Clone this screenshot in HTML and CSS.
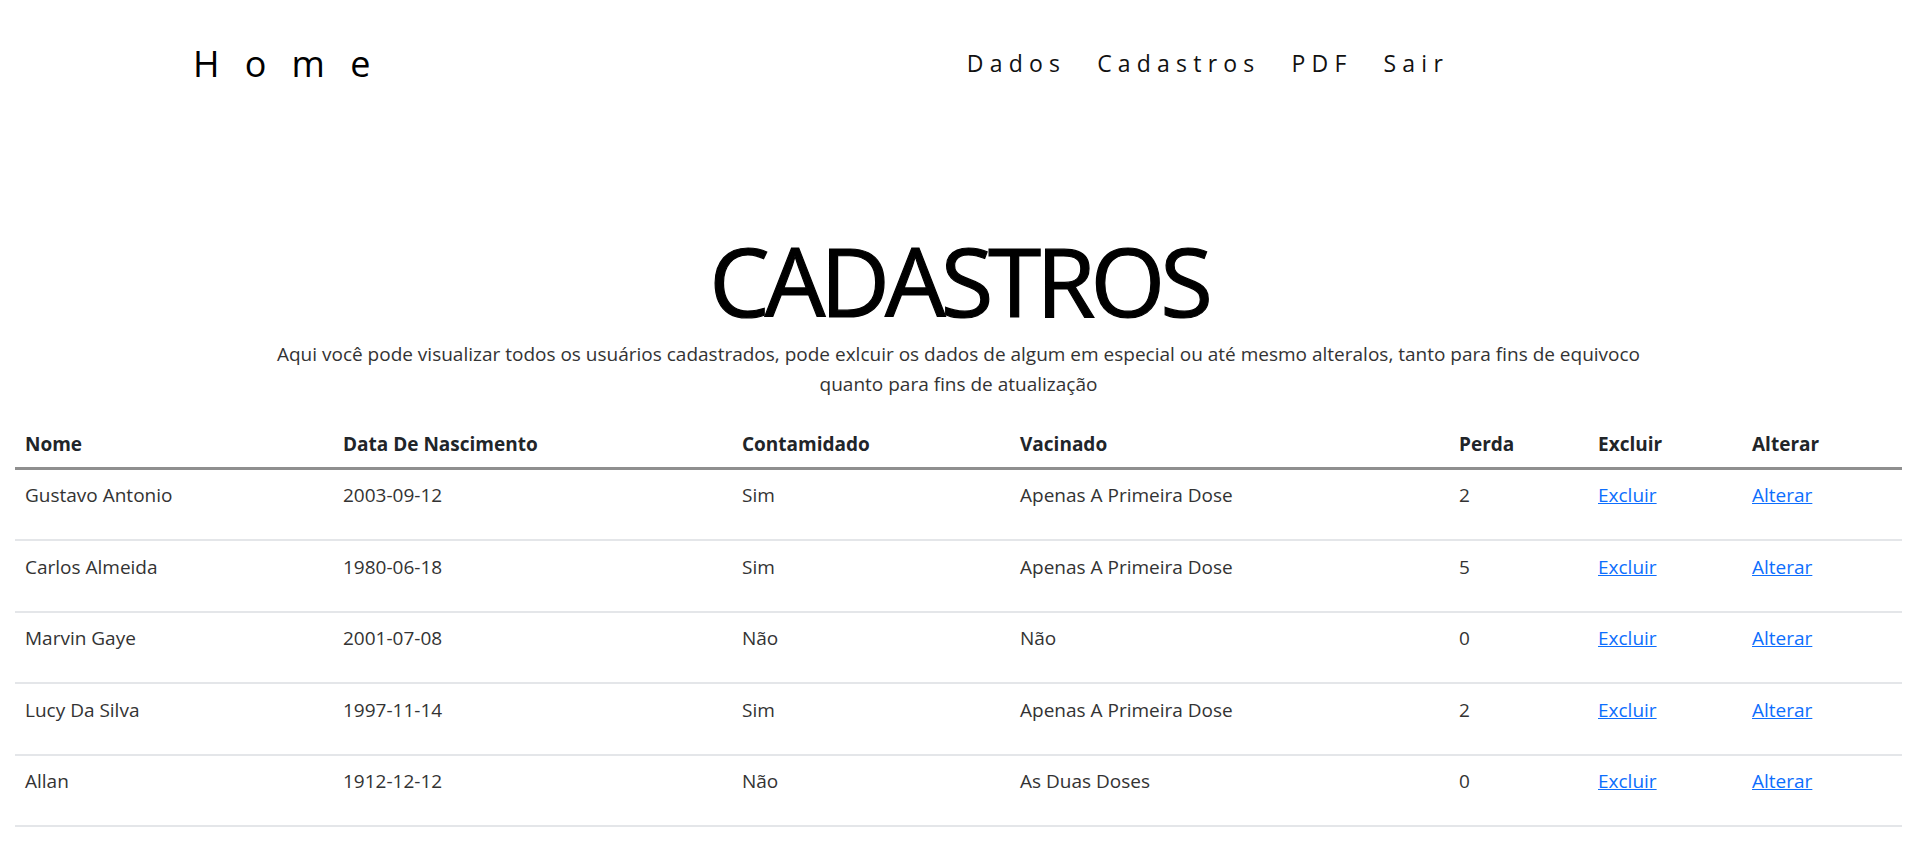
FILE: index.html
```html
<!DOCTYPE html>
<html lang="pt-BR">
<head>
<meta charset="utf-8">
<title>Cadastros</title>
<link rel="stylesheet" href="styles.css">
</head>
<body>
<header class="topbar">
  <a class="brand" href="#">Home</a>
  <nav class="menu">
    <a href="#">Dados</a>
    <a href="#">Cadastros</a>
    <a href="#">PDF</a>
    <a href="#">Sair</a>
  </nav>
</header>
<main>
  <h1 class="title">CADASTROS</h1>
  <p class="lead">Aqui você pode visualizar todos os usuários cadastrados, pode exlcuir os dados de algum em especial ou até mesmo alteralos, tanto para fins de equivoco<br>quanto para fins de atualização</p>
  <table class="grid">
    <colgroup>
      <col class="c-nome"><col class="c-data"><col class="c-cont"><col class="c-vac"><col class="c-perda"><col class="c-exc"><col class="c-alt">
    </colgroup>
    <thead>
      <tr><th>Nome</th><th>Data De Nascimento</th><th>Contamidado</th><th>Vacinado</th><th>Perda</th><th>Excluir</th><th>Alterar</th></tr>
    </thead>
    <tbody>
      <tr><td>Gustavo Antonio</td><td>2003-09-12</td><td>Sim</td><td>Apenas A Primeira Dose</td><td>2</td><td><a href="#">Excluir</a></td><td><a href="#">Alterar</a></td></tr>
      <tr><td>Carlos Almeida</td><td>1980-06-18</td><td>Sim</td><td>Apenas A Primeira Dose</td><td>5</td><td><a href="#">Excluir</a></td><td><a href="#">Alterar</a></td></tr>
      <tr><td>Marvin Gaye</td><td>2001-07-08</td><td>Não</td><td>Não</td><td>0</td><td><a href="#">Excluir</a></td><td><a href="#">Alterar</a></td></tr>
      <tr><td>Lucy Da Silva</td><td>1997-11-14</td><td>Sim</td><td>Apenas A Primeira Dose</td><td>2</td><td><a href="#">Excluir</a></td><td><a href="#">Alterar</a></td></tr>
      <tr><td>Allan</td><td>1912-12-12</td><td>Não</td><td>As Duas Doses</td><td>0</td><td><a href="#">Excluir</a></td><td><a href="#">Alterar</a></td></tr>
    </tbody>
  </table>
</main>
</body>
</html>
```
FILE: styles.css
```css
* { box-sizing: border-box; }
html, body { margin: 0; padding: 0; background: #fff; }
body {
  font-family: "Segoe UI", "Open Sans", "Noto Sans", sans-serif;
  color: #212529;
  font-size: 19px;
  line-height: 1.5;
}
.topbar {
  height: 127px;
  display: flex;
  align-items: center;
  padding-left: 193px;
  padding-right: 468px;
}
.brand {
  font-size: 36px;
  letter-spacing: 0.7em;
  color: #000;
  text-decoration: none;
  line-height: 1;
}
.menu {
  margin-left: auto;
  display: flex;
  gap: 31px;
}
.menu a {
  font-size: 23px;
  letter-spacing: 0.27em;
  color: #111;
  text-decoration: none;
  line-height: 1;
}
.title {
  margin: 100px 0 6px;
  text-align: center;
  font-size: 96px;
  font-weight: 400;
  line-height: 1.1;
  letter-spacing: -5px;
  color: #000;
  -webkit-text-stroke: 1.2px #000;
}
.lead {
  margin: 0 auto 19px;
  max-width: 1420px;
  text-align: center;
  line-height: 30.5px;
  color: #333;
}
.grid {
  width: calc(100% - 30px);
  margin: 0 15px;
  border-collapse: collapse;
  table-layout: fixed;
}
.c-nome { width: 318px; }
.c-data { width: 399px; }
.c-cont { width: 278px; }
.c-vac { width: 439px; }
.c-perda { width: 139px; }
.c-exc { width: 154px; }
.c-alt { width: 160px; }
.grid th {
  text-align: left;
  font-weight: 700;
  padding: 10px 10px 8px;
  line-height: 30px;
  border-bottom: 3px solid #8f8f8f;
  color: #212529;
}
.grid td {
  padding: 10.5px 10px 29px;
  line-height: 30px;
  border-bottom: 2px solid #e4e6e9;
  color: #333;
  vertical-align: top;
}
.grid a { color: #0d6efd; text-decoration: underline; }
```
